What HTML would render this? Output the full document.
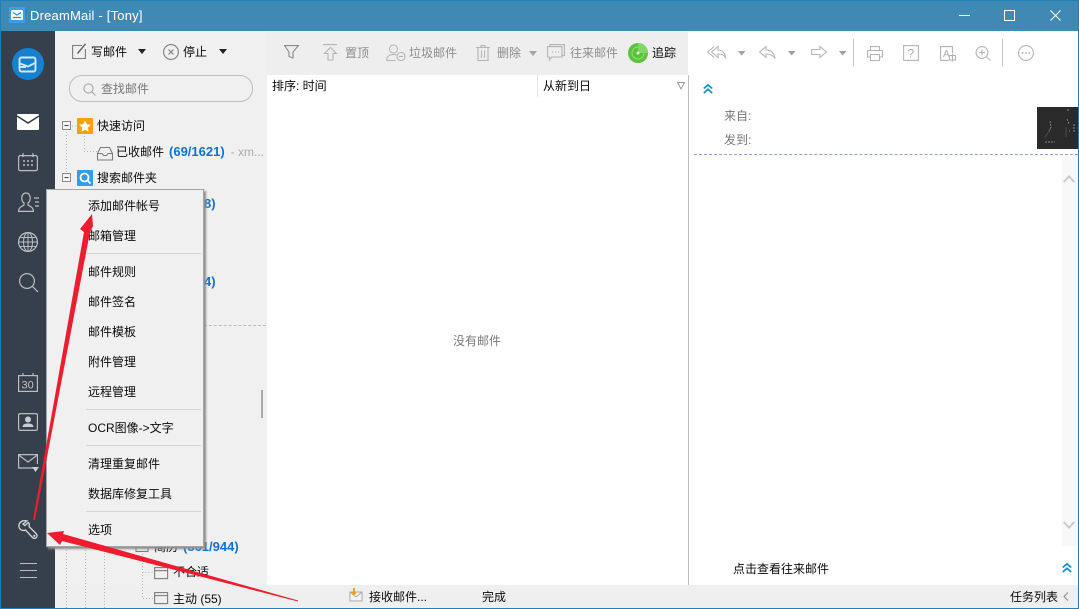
<!DOCTYPE html>
<html><head><meta charset="utf-8"><style>
html,body{margin:0;padding:0;width:1079px;height:609px;overflow:hidden;background:#fff}
body{position:relative;font:12px/16px "Liberation Sans","Noto Sans CJK SC",sans-serif;color:#0a0a0a}
.r{position:absolute}
.t{position:absolute;white-space:nowrap;line-height:16px}
.g{color:#8d8d8d}
.b{color:#0f72d0;font-weight:bold;font-size:13px}
svg{position:absolute;overflow:visible}
.m{stroke:#b9bec4;fill:none;stroke-width:1.2}
.i{stroke:#7c7c7c;fill:none;stroke-width:1.1}
.d{stroke:#b5b5b5;fill:none;stroke-width:1.1}
.sep{position:absolute;left:86px;width:115px;height:1px;background:#d6d6d6}
</style></head><body>
<!-- frame regions -->
<div class="r" style="left:0;top:0;width:1079px;height:31px;background:#3f8ab5;border-top:1px solid #1f7fb8;box-sizing:border-box"></div>
<div class="r" style="left:0;top:0;width:1px;height:609px;background:#1f7fb8"></div>
<div class="r" style="left:1078px;top:0;width:1px;height:609px;background:#1f7fb8"></div>
<div class="r" style="left:1px;top:31px;width:54px;height:577px;background:#36404d"></div>
<div class="r" style="left:55px;top:31px;width:212px;height:554px;background:#f0f0f0"></div>
<div class="r" style="left:267px;top:31px;width:421px;height:44px;background:#eeeeee"></div>
<div class="r" style="left:55px;top:585px;width:1023px;height:23px;background:#efefef"></div>
<div class="r" style="left:0;top:608px;width:1079px;height:1px;background:#1f7fb8"></div>
<div class="r" style="left:688px;top:75px;width:1px;height:510px;background:#bdbdbd"></div>
<div class="r" style="left:537px;top:75px;width:1px;height:22px;background:#e6e6e6"></div>
<div class="r" style="left:1062px;top:156px;width:16px;height:390px;background:#f8f8f8"></div>

<!-- titlebar -->
<svg style="left:9px;top:7px" width="16" height="16"><rect width="16" height="16" fill="#3d9ded"/><rect x="2" y="3" width="12" height="10" rx="1" fill="#fff"/><path d="M4 5.500l4 2.500 4-2.500M4 10.500h8" fill="none" stroke="#2688da" stroke-width="1.300"/></svg>
<div class="t" style="left:30px;top:8px;color:#fff;font-size:13px;letter-spacing:.2px">DreamMail - [Tony]</div>
<div class="r" style="left:959px;top:15px;width:11px;height:1px;background:#fff"></div>
<div class="r" style="left:1004px;top:10px;width:9px;height:9px;border:1px solid #fff"></div>
<svg style="left:1050px;top:10px" width="11" height="11"><path d="M.5.5l10 10M10.500.5l-10 10" stroke="#fff" stroke-width="1.100"/></svg>

<!-- sidebar icons -->
<svg style="left:12px;top:48px" width="32" height="32"><circle cx="16" cy="16" r="16" fill="#1482d0"/><rect x="7.500" y="9.500" width="16" height="14" rx="2" fill="none" stroke="#d3e7f6" stroke-width="1.900"/><path d="M8 15.500l8 3 8-4M8 19h6" fill="none" stroke="#d3e7f6" stroke-width="1.900"/></svg>
<svg style="left:17px;top:114px" width="22" height="16"><rect width="22" height="16" rx="1" fill="#fff"/><path d="M0 2l11 7 11-7" fill="none" stroke="#36404d" stroke-width="1.600"/></svg>
<svg style="left:18px;top:153px" width="20" height="18"><rect class="m" x=".6" y="2.600" width="18.800" height="15" rx="1.500"/><path class="m" d="M5 0v4M15 0v4"/><path d="M5 8h2M9 8h2M13 8h2M5 12h2M9 12h2M13 12h2" stroke="#b9bec4" stroke-width="1.500"/></svg>
<svg style="left:18px;top:192px" width="22" height="20"><path class="m" d="M.6 19.400c0-4 3-5 5.400-6.400v-2c-1.500-1-2.200-3-2.200-5 0-3 1.800-5 4.200-5s4.200 2 4.200 5c0 2-.7 4-2.200 5v2c2.400 1.400 5.400 2.400 5.400 6.400z"/><path class="m" d="M16 6h5M17 10h4M17 14h4"/></svg>
<svg style="left:18px;top:232px" width="20" height="20"><circle class="m" cx="10" cy="10" r="9.400"/><ellipse class="m" cx="10" cy="10" rx="4.500" ry="9.400" style="stroke-width:1"/><path class="m" d="M.6 10h18.800M2 5.500h16M2 14.500h16M10 .6v18.800" style="stroke-width:1"/></svg>
<svg style="left:19px;top:273px" width="20" height="20"><circle class="m" cx="8" cy="8" r="7.400"/><path class="m" d="M13.500 13.500l5.500 5.500"/></svg>
<svg style="left:18px;top:373px" width="20" height="19"><rect class="m" x=".6" y="2.600" width="18.800" height="15.800"/><path class="m" d="M5 0v3M15 0v3"/><text x="3.500" y="15.500" font-size="11" fill="#c0c5ca" font-family="Liberation Sans">30</text></svg>
<svg style="left:18px;top:413px" width="20" height="18"><rect x=".6" y=".6" width="18.800" height="16.800" rx="1.500" class="m"/><circle cx="10" cy="6.500" r="3" fill="#c9cdd2"/><path d="M4.500 14c0-3 3-3.500 5.500-3.500s5.500.5 5.500 3.500z" fill="#c9cdd2"/></svg>
<svg style="left:18px;top:454px" width="22" height="18"><path class="m" d="M16 14H.6V.6h18.800V10M.6 1l9.400 7 9.400-7"/><path d="M14 13h7l-3.500 5z" fill="#c9cdd2"/></svg>
<svg style="left:18px;top:520px" width="20" height="20"><path d="M9 1C6 0 2.500 1 1.200 4C.5 6 1 8 2.500 9.500C4 10.500 6 10.800 7.500 10L14.500 17.500C15.800 18.800 18 18.500 18.700 17C19.400 15.500 19 14.500 18 13.500L11 6.500C11.500 5 11.300 3.500 10.500 2.500L7 5.500L5 4z" fill="none" stroke="#d6d9dc" stroke-width="1.300"/><circle cx="16.300" cy="15.800" r="1.100" fill="#d6d9dc"/></svg>
<div class="r" style="left:20px;top:563px;width:17px;height:1px;background:#b9bec4"></div>
<div class="r" style="left:20px;top:570px;width:17px;height:1px;background:#b9bec4"></div>
<div class="r" style="left:20px;top:577px;width:17px;height:1px;background:#b9bec4"></div>

<!-- left toolbar -->
<svg style="left:72px;top:43px" width="15" height="16"><path class="i" d="M10 2.500H.6v13h12.800V6"/><path d="M5.500 10.500L13.500.8" stroke="#666" stroke-width="1.500"/></svg>
<div class="t" style="left:91px;top:44px">写邮件</div>
<svg style="left:138px;top:49px" width="8" height="5"><path d="M0 0h8L4 5z" fill="#222"/></svg>
<svg style="left:163px;top:44px" width="16" height="16"><circle class="i" cx="8" cy="8" r="7.400"/><path class="i" d="M5.500 5.500l5 5M10.500 5.500l-5 5"/></svg>
<div class="t" style="left:183px;top:44px">停止</div>
<svg style="left:219px;top:49px" width="8" height="5"><path d="M0 0h8L4 5z" fill="#222"/></svg>
<div class="r" style="left:69px;top:75px;width:182px;height:25px;border:1px solid #bdbdbd;border-radius:13px"></div>
<svg style="left:83px;top:83px" width="13" height="13"><circle cx="5.500" cy="5.500" r="4.600" fill="none" stroke="#a0a0a0"/><path d="M9 9l3.500 3.500" stroke="#a0a0a0"/></svg>
<div class="t g" style="left:101px;top:81px;color:#777">查找邮件</div>

<!-- tree -->
<svg style="left:60px;top:118px;width:210px;height:490px" width="210" height="490">
<g stroke="#b4b4b4" stroke-dasharray="1 2" fill="none">
<path d="M6.500 14v46M12 8h5M24.500 18v15.500h13"/>
<path d="M6.500 420v70M25.500 420v70M44.500 420v70M63.500 420v10"/>
<path d="M82.500 430v50.500h12M82.500 454.500h12"/>
</g>
<rect x="2.500" y="3.500" width="8" height="8" fill="#f4f4f4" stroke="#8a8a8a"/><path d="M4.500 7.500h4" stroke="#445"/>
<rect x="2.500" y="55.500" width="8" height="8" fill="#f4f4f4" stroke="#8a8a8a"/><path d="M4.500 59.500h4" stroke="#445"/>
<rect x="17" y="0" width="16" height="16" rx="1" fill="#ff9f0a"/><path d="M25 2.500l1.800 3.800 4 .5-3 2.800.8 4.100-3.600-2-3.600 2 .8-4.100-3-2.800 4-.5z" fill="#fff"/>
<rect x="17" y="52" width="16" height="16" rx="1" fill="#2e9ef5"/><circle cx="24.500" cy="59.500" r="4" fill="none" stroke="#fff" stroke-width="1.800"/><path d="M27.500 62.500l3 3" stroke="#fff" stroke-width="1.800"/>
<path class="i" d="M37.500 35.500l3-6h9l3 6v6.500h-15zM37.500 35.500h4.500l1.500 2h3l1.500-2h4.500"/>
</svg>
<div class="t" style="left:97px;top:118px">快速访问</div>
<div class="t" style="left:116px;top:144px">已收邮件<span class="b" style="margin-left:5px">(69/1621)</span><span style="color:#aaa;margin-left:6px">- xm...</span></div>
<div class="t" style="left:97px;top:170px">搜索邮件夹</div>
<div class="r" style="left:204px;top:325px;width:62px;height:0;border-top:1px dashed #bdbdbd"></div>
<div class="r" style="left:261px;top:390px;width:2px;height:28px;background:#a9a9a9"></div>
<div class="t b" style="left:204px;top:196px">8)</div>
<div class="t b" style="left:204px;top:274px">4)</div>
<svg style="left:135px;top:538px" width="14" height="16"><rect class="i" x="1" y="3.500" width="12" height="10"/><path class="i" d="M1 6.500h12"/></svg>
<div class="t" style="left:154px;top:539px">简历<span class="b" style="margin-left:5px">(861/944)</span></div>
<svg style="left:154px;top:566px" width="15" height="14"><rect class="i" x=".6" y="1.600" width="13" height="11"/><path class="i" d="M.6 4.600h13"/></svg>
<div class="t" style="left:173px;top:564px">不合适</div>
<svg style="left:154px;top:591px" width="15" height="14"><rect class="i" x=".6" y="1.600" width="13" height="11"/><path class="i" d="M.6 4.600h13"/></svg>
<div class="t" style="left:173px;top:591px">主动 (55)</div>

<!-- middle toolbar -->
<svg style="left:284px;top:45px" width="15" height="16"><path d="M.6.6h13.800L9 7v6l-4-1.500V7z" fill="none" stroke="#8a8a8a" stroke-width="1.100"/></svg>
<svg style="left:323px;top:44px" width="15" height="17"><path class="d" d="M0 .6h14M7.500 3.500L1.500 9.500h3.500v6.500h5V9.500h3.500z"/></svg>
<div class="t g" style="left:345px;top:45px">置顶</div>
<svg style="left:386px;top:44px" width="21" height="18"><circle class="d" cx="7.500" cy="5" r="4"/><path class="d" d="M.6 16.500c0-4 3-6 7-6 1 0 2 .2 3 .5M.6 16.500h9"/><circle class="d" cx="15" cy="12.500" r="4"/><path class="d" d="M12.800 12.500h4.400"/></svg>
<div class="t g" style="left:409px;top:45px">垃圾邮件</div>
<svg style="left:476px;top:45px" width="14" height="16"><path class="d" d="M0 2.500h14M5 2.500V.6h4v1.900M2 2.500v13h10v-13M5.500 5.500v7.500M8.500 5.500v7.500"/></svg>
<div class="t g" style="left:497px;top:45px">删除</div>
<svg style="left:529px;top:51px" width="8" height="5"><path d="M0 0h8L4 5z" fill="#a5a5a5"/></svg>
<svg style="left:547px;top:44px" width="18" height="17"><path class="d" d="M3 2V.6h14.400v11H15M.6 2.600h14.400v10.400H5l-2.500 3v-3H.6z"/><path d="M5 8h1M8 8h1M11 8h1" stroke="#aaa"/></svg>
<div class="t g" style="left:570px;top:45px">往来邮件</div>
<svg style="left:628px;top:43px" width="20" height="20"><circle cx="10" cy="10" r="10" fill="#5cc23c"/><circle cx="10" cy="10" r="6" fill="none" stroke="#8ee070"/><path d="M10 0a10 10 0 0 1 10 10H10z" fill="#83d566"/><circle cx="10" cy="10" r="1.500" fill="#d8f5cc"/></svg>
<div class="t" style="left:652px;top:45px">追踪</div>
<div class="t" style="left:272px;top:78px">排序: 时间</div>
<div class="t" style="left:543px;top:78px">从新到日</div>
<svg style="left:677px;top:82px" width="8" height="8"><path d="M.5.5h7L4 7z" fill="none" stroke="#999"/></svg>
<div class="t" style="left:453px;top:333px;color:#777">没有邮件</div>

<!-- right toolbar -->
<svg style="left:707px;top:46px" width="20" height="13"><path class="d" d="M7 .6L.6 6l6.400 5.400M11 .6L4.600 6l6.400 5.400V8c4 0 6.500 1 8 4.500C18 7 15 4 11 4z"/></svg>
<svg style="left:738px;top:51px" width="8" height="5"><path d="M0 0h7.500L3.700 4.500z" fill="#a0a0a0"/></svg>
<svg style="left:759px;top:46px" width="17" height="13"><path class="d" d="M7 .6L.6 6l6.400 5.400V8c4 0 7 1 9 4.500C15 7 12 4 7 4z"/></svg>
<svg style="left:788px;top:51px" width="8" height="5"><path d="M0 0h7.500L3.700 4.500z" fill="#a0a0a0"/></svg>
<svg style="left:811px;top:46px" width="16" height="13"><path class="d" d="M9 .6L15.400 6 9 11.400V8.500H.6v-5H9z"/></svg>
<svg style="left:839px;top:51px" width="8" height="5"><path d="M0 0h7.500L3.700 4.500z" fill="#a0a0a0"/></svg>
<div class="r" style="left:853px;top:39px;width:1px;height:28px;background:#c4c4c4"></div>
<svg style="left:867px;top:46px" width="16" height="15"><path class="d" d="M3.500 4V.6h9V4M3.500 11H.6V4.500h14.800V11H12.500M3.500 8.500h9v6h-9z"/></svg>
<svg style="left:903px;top:45px" width="16" height="16"><rect class="d" x=".6" y=".6" width="14.800" height="14.800"/><text x="4.500" y="12.500" font-size="12" fill="#aaa" font-family="Liberation Sans">?</text></svg>
<svg style="left:940px;top:46px" width="17" height="16"><path class="d" d="M12.500 7V.6H.6v13.800h8"/><text x="3" y="11" font-size="10" fill="#aaa" font-family="Liberation Sans">A</text><rect class="d" x="9.500" y="9.500" width="6" height="4.500"/><path class="d" d="M12.500 7.500v8"/></svg>
<svg style="left:975px;top:46px" width="16" height="15"><circle class="d" cx="7" cy="6.500" r="5.900"/><path class="d" d="M4 6.500h6M7 3.500v6M11 10.500l4.500 4"/></svg>
<div class="r" style="left:1002px;top:39px;width:1px;height:28px;background:#c4c4c4"></div>
<svg style="left:1018px;top:45px" width="16" height="16"><circle class="d" cx="8" cy="8" r="7.400"/><path d="M4 8h1.500M7.300 8h1.500M10.600 8h1.500" stroke="#999" stroke-width="1.300"/></svg>
<svg style="left:703px;top:84px" width="10" height="10"><path d="M.8 4.500L5 .8l4.200 3.700M.8 9L5 5.300 9.200 9" fill="none" stroke="#1093cf" stroke-width="1.800"/></svg>
<div class="t" style="left:724px;top:108px;color:#777">来自:</div>
<div class="t" style="left:724px;top:132px;color:#777">发到:</div>
<div class="r" style="left:1037px;top:107px;width:41px;height:42px;background:#2a2a2a"></div>
<svg style="left:1037px;top:107px" width="41" height="42"><path d="M13 14l1 6-2 4M30 3h3M30 12l2 5M37 17v8M32 24h1M8 35h10" stroke="#858585" fill="none" stroke-width="1" stroke-dasharray="2 1"/><path d="M14 22l-6 8M29 20v10" stroke="#4c4c4c" fill="none"/></svg>
<div class="r" style="left:694px;top:154px;width:384px;height:0;border-top:1px dashed #8fa2c6"></div>
<svg style="left:1063px;top:175px" width="12" height="8"><path d="M.8 7L6 1.500 11.200 7" fill="none" stroke="#ccc" stroke-width="2"/></svg>
<svg style="left:1063px;top:521px" width="12" height="8"><path d="M.8 1L6 6.500 11.200 1" fill="none" stroke="#ccc" stroke-width="2"/></svg>
<div class="t" style="left:733px;top:561px">点击查看往来邮件</div>
<svg style="left:1062px;top:563px" width="10" height="10"><path d="M.8 4.500L5 .8l4.200 3.700M.8 9L5 5.300 9.200 9" fill="none" stroke="#1093cf" stroke-width="1.800"/></svg>

<!-- status -->
<svg style="left:349px;top:588px" width="15" height="14"><rect x="1" y="4" width="12" height="9" fill="#f4f4f4" stroke="#aaa"/><path d="M1 4l6 5 6-5" fill="none" stroke="#aaa"/><path d="M4 0v4H2l3 4 3-4H6V0z" fill="#f2a020"/></svg>
<div class="t" style="left:369px;top:589px">接收邮件...</div>
<div class="t" style="left:482px;top:589px">完成</div>
<div class="t" style="left:1010px;top:589px">任务列表</div>
<svg style="left:1063px;top:592px" width="6" height="9"><path d="M5 .5L1 4.500 5 8.500" fill="none" stroke="#888"/></svg>

<!-- context menu -->
<div class="r" style="left:46px;top:189px;width:156px;height:356px;background:#f0f0f0;border:1px solid #a5a5a5;box-shadow:2px 2px 2px #8d8d8d"></div>
<div class="sep" style="top:253px"></div>
<div class="sep" style="top:409px"></div>
<div class="sep" style="top:445px"></div>
<div class="sep" style="top:511px"></div>
<div class="t" style="left:88px;top:198px">添加邮件帐号</div>
<div class="t" style="left:88px;top:228px">邮箱管理</div>
<div class="t" style="left:88px;top:264px">邮件规则</div>
<div class="t" style="left:88px;top:294px">邮件签名</div>
<div class="t" style="left:88px;top:324px">邮件模板</div>
<div class="t" style="left:88px;top:354px">附件管理</div>
<div class="t" style="left:88px;top:384px">远程管理</div>
<div class="t" style="left:88px;top:420px">OCR图像-&gt;文字</div>
<div class="t" style="left:88px;top:456px">清理重复邮件</div>
<div class="t" style="left:88px;top:486px">数据库修复工具</div>
<div class="t" style="left:88px;top:522px">选项</div>

<!-- red arrows -->
<svg style="left:0;top:0" width="1079" height="609">
<path d="M33 520L84 232L80 229L92 214L93 226L90 232L35 520z" fill="#ee1c2e"/>
<path d="M47 533L64 531L63 534L298 600.500L298 601.500L62 541L60 545z" fill="#ee1c2e"/>
</svg>
</body></html>
